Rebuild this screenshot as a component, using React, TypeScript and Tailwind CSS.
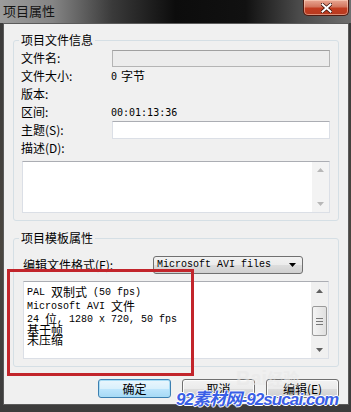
import React from "react";

function Tri({ dir, color }: { dir: "up" | "down"; color: string }) {
  return (
    <svg width="7" height="4" viewBox="0 0 7 4">
      <path d={dir === "up" ? "M0 4 L3.5 0 L7 4Z" : "M0 0 L3.5 4 L7 0Z"} fill={color} />
    </svg>
  );
}

function Btn({ children, primary }: { children: React.ReactNode; primary?: boolean }) {
  return (
    <div
      className={
        "w-[73px] h-[19px] rounded-[3px] border flex items-center justify-center text-[12px] leading-none text-black " +
        (primary
          ? "border-[#3c7fb1] bg-[linear-gradient(to_bottom,#eaf6fd,#d9f0fc_50%,#bee6fd_51%,#a7d9f5)] shadow-[inset_0_0_0_1px_#a8dcf5]"
          : "border-[#707070] bg-[linear-gradient(to_bottom,#f2f2f2,#ebebeb_50%,#dddddd_51%,#cfcfcf)] shadow-[inset_0_0_0_1px_#fcfcfc]")
      }
    >
      {children}
    </div>
  );
}

export default function App() {
  return (
    <div className="relative w-[351px] h-[412px] overflow-hidden flex flex-col bg-[linear-gradient(to_bottom,#3a3a3a,#4a4640_60%,#3c3c3c)] font-['Noto_Sans_CJK_SC','Noto_Sans',sans-serif] text-black">
      {/* Title bar */}
      <div className="h-[23px] flex justify-between items-start bg-[linear-gradient(to_right,#9c9c9c,#858585_15%,#3a3a3a_32%,#0c0c0c_50%,#111_70%,#4a4a4a_85%,#6e6e6e)]">
        <div className="pl-[3px] pt-[2px] text-[13px] leading-[17px] text-[#141414]">项目属性</div>
        <div className="mr-[2px] w-[46px] h-[16px] rounded-b-[5px] border border-t-0 border-[#4e1a10] bg-[linear-gradient(to_bottom,#e9a793,#d3765e_45%,#c23c20_55%,#b5391f)] shadow-[inset_0_0_0_1px_rgba(255,220,200,0.5)] flex items-center justify-center">
          <svg width="11" height="10" viewBox="0 0 11 10">
            <path d="M1 1 L10 9 M10 1 L1 9" stroke="#3a1008" strokeWidth="3.4" strokeLinecap="square" />
            <path d="M1.5 1.5 L9.5 8.5 M9.5 1.5 L1.5 8.5" stroke="#ffffff" strokeWidth="2" strokeLinecap="square" />
          </svg>
        </div>
      </div>

      {/* Client area */}
      <div className="ml-[3px] w-[346px] h-[382px] bg-[#f0f0f0] border border-[#5b5b5b] pl-[9px] pr-[9px] flex flex-col">
        {/* Group 1 */}
        <fieldset className="mt-[8px] border border-[#d5dfe5] rounded-[3px] pl-[5px] pb-[7px]">
          <legend className="px-[2px] text-[12px] leading-[16px]">项目文件信息</legend>
          <div className="pl-[2px] pr-[8px] pt-[1px] text-[12px] flex flex-col">
            <div className="h-[18px] flex items-center">
              <div className="w-[91px]">文件名:</div>
              <div className="w-[218px] h-[17px] bg-[#ececec] border border-[#b4b4b4] border-t-[#a0a0a0]" />
            </div>
            <div className="h-[18px] flex items-center">
              <div className="w-[90px]">文件大小:</div>
              <div className="flex items-center gap-[4px]">
                <span className="font-['DejaVu_Sans_Mono',monospace] text-[10px]">0</span>
                <span>字节</span>
              </div>
            </div>
            <div className="h-[18px] flex items-center">
              <div className="w-[91px]">版本:</div>
            </div>
            <div className="h-[18px] flex items-center">
              <div className="w-[90px]">区间:</div>
              <span className="font-['DejaVu_Sans_Mono',monospace] text-[10px]">00:01:13:36</span>
            </div>
            <div className="h-[18px] flex items-center">
              <div className="w-[91px]">主题(S):</div>
              <div className="w-[218px] h-[18px] bg-white border border-[#dbdfe6] border-t-[#abadb3]" />
            </div>
            <div className="h-[18px] flex items-center">
              <div>描述(D):</div>
            </div>
            <div className="mt-[4px] ml-[1px] w-[308px] h-[52px] bg-white border border-[#dbdfe6] border-t-[#abadb3] flex justify-end">
              <div className="w-[17px] h-full bg-[#f3f3f3] flex flex-col justify-between items-center py-[6px]">
                <Tri dir="up" color="#b8b8b8" />
                <Tri dir="down" color="#b8b8b8" />
              </div>
            </div>
          </div>
        </fieldset>

        {/* Group 2 */}
        <fieldset className="mt-[9px] border border-[#d5dfe5] rounded-[3px] pl-[5px] pb-[7px]">
          <legend className="px-[2px] text-[12px] leading-[16px]">项目模板属性</legend>
          <div className="pl-[4px] pr-[9px] pt-[10px] text-[12px] flex flex-col">
            <div className="h-[18px] flex items-center">
              <div className="w-[130px]">编辑文件格式(F):</div>
              <div className="w-[150px] h-[18px] rounded-[3px] border border-[#707070] bg-[linear-gradient(to_bottom,#f2f2f2,#ebebeb_50%,#dddddd_51%,#cfcfcf)] flex items-center justify-between pl-[3px] pr-[6px]">
                <span className="font-['Liberation_Mono',monospace] text-[10px] leading-none">Microsoft AVI files</span>
                <Tri dir="down" color="#000" />
              </div>
            </div>
            <div className="mt-[7px] w-[306px] h-[78px] bg-white border border-[#dbdfe6] border-t-[#abadb3] flex">
              <div className="flex-1 pl-[3px] pt-[3px] font-['Liberation_Mono','Noto_Sans_CJK_SC',monospace] text-[10px] text-black flex flex-col">
                <div className="h-[14px] flex items-center whitespace-pre">
                  {"PAL "}<span className="font-['Noto_Sans_CJK_SC',sans-serif] text-[12px] leading-none">双制式</span>{" (50 fps)"}
                </div>
                <div className="h-[14px] flex items-center whitespace-pre">
                  {"Microsoft AVI "}<span className="font-['Noto_Sans_CJK_SC',sans-serif] text-[12px] leading-none">文件</span>
                </div>
                <div className="h-[12px] flex items-center whitespace-pre">
                  {"24 "}<span className="font-['Noto_Sans_CJK_SC',sans-serif] text-[12px] leading-none">位</span>{", 1280 x 720, 50 fps"}
                </div>
                <div className="h-[10px] flex items-center font-['Noto_Sans_CJK_SC',sans-serif] text-[12px] leading-none">基于帧</div>
                <div className="h-[10px] flex items-center font-['Noto_Sans_CJK_SC',sans-serif] text-[12px] leading-none">未压缩</div>
              </div>
              <div className="w-[17px] h-full bg-[#f0f0f0] flex flex-col items-center">
                <div className="h-[17px] flex items-center justify-center">
                  <Tri dir="up" color="#606060" />
                </div>
                <div className="mt-[7px] w-[15px] h-[30px] rounded-[2px] border border-[#9a9a9a] bg-[linear-gradient(to_right,#f4f4f4,#e0e0e0)] flex flex-col items-center justify-center gap-[2px]">
                  <div className="w-[7px] h-[1px] bg-[#777]" />
                  <div className="w-[7px] h-[1px] bg-[#777]" />
                  <div className="w-[7px] h-[1px] bg-[#777]" />
                </div>
                <div className="flex-1" />
                <div className="h-[17px] flex items-center justify-center">
                  <Tri dir="down" color="#606060" />
                </div>
              </div>
            </div>
          </div>
        </fieldset>

        {/* Buttons */}
        <div className="mt-[12px] flex justify-end gap-[11px]">
          <Btn primary>确定</Btn>
          <Btn>取消</Btn>
          <Btn>编辑(E)</Btn>
        </div>
      </div>

      {/* Baidu watermark (faint) */}
      <div className="absolute left-[236px] top-[368px] whitespace-nowrap text-[20px] font-bold text-[#e8e8e8] font-['Liberation_Sans',sans-serif] leading-none opacity-60">
        Bai<span className="text-[16px] font-['Noto_Sans_CJK_SC',sans-serif]">经验</span>
      </div>

      {/* Red annotation box */}
      <div className="absolute left-[7px] top-[269px] w-[187px] h-[107px] border-[3px] border-[#c2252b]" />

      {/* Site watermark */}
      <div className="absolute left-[176px] top-[389px] whitespace-nowrap text-[17px] font-bold italic leading-[22px] tracking-[-0.9px] text-[#3a5ee6] font-['Liberation_Sans','Noto_Sans_CJK_SC',sans-serif] [text-shadow:1px_0_0_#fff,-1px_0_0_#fff,0_1px_0_#fff,0_-1px_0_#fff]">
        92素材网-92sucai.com
      </div>
    </div>
  );
}
